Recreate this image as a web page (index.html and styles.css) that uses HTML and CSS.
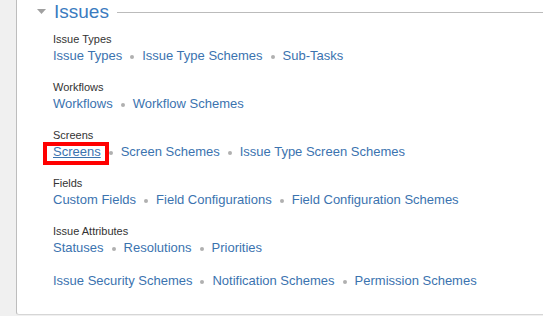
FILE: index.html
```html
<!DOCTYPE html>
<html lang="en">
<head>
<meta charset="utf-8">
<title>Issues</title>
<link rel="stylesheet" href="styles.css">
</head>
<body>
<div class="panel">
  <div class="heading">
    <svg class="twisty" width="9" height="5" viewBox="0 0 9 5"><polygon points="0,0 9,0 4.5,5" fill="#a0a0a0"/></svg>
    <h2 class="title">Issues</h2>
    <span class="rule"></span>
  </div>
  <div class="content">
    <div class="section">
      <div class="label">Issue Types</div>
      <div class="links"><a href="#">Issue Types</a><span class="sep"></span><a href="#">Issue Type Schemes</a><span class="sep"></span><a href="#">Sub-Tasks</a></div>
    </div>
    <div class="section">
      <div class="label">Workflows</div>
      <div class="links"><a href="#">Workflows</a><span class="sep"></span><a href="#">Workflow Schemes</a></div>
    </div>
    <div class="section">
      <div class="label">Screens</div>
      <div class="links"><a href="#" class="active">Screens</a><span class="sep"></span><a href="#">Screen Schemes</a><span class="sep"></span><a href="#">Issue Type Screen Schemes</a></div>
    </div>
    <div class="section">
      <div class="label">Fields</div>
      <div class="links"><a href="#">Custom Fields</a><span class="sep"></span><a href="#">Field Configurations</a><span class="sep"></span><a href="#">Field Configuration Schemes</a></div>
    </div>
    <div class="section">
      <div class="label">Issue Attributes</div>
      <div class="links"><a href="#">Statuses</a><span class="sep"></span><a href="#">Resolutions</a><span class="sep"></span><a href="#">Priorities</a></div>
    </div>
    <div class="section">
      <div class="links"><a href="#">Issue Security Schemes</a><span class="sep"></span><a href="#">Notification Schemes</a><span class="sep"></span><a href="#">Permission Schemes</a></div>
    </div>
  </div>
</div>
</body>
</html>
```
FILE: styles.css
```css
html, body {
  margin: 0;
  padding: 0;
}
body {
  background: #f0f0f0;
  font-family: "Liberation Sans", Arial, sans-serif;
  color: #333;
  height: 316px;
  overflow: hidden;
}
.panel {
  margin-left: 16px;
  height: 315px;
  box-sizing: border-box;
  background: #fff;
  border-left: 1px solid #bdbdbd;
  border-bottom: 1px solid #d6d6d6;
  border-bottom-left-radius: 3px;
}
.heading {
  display: flex;
  align-items: center;
  height: 24px;
  padding-left: 20px;
}
.twisty {
  display: block;
  margin-top: -2px;
  margin-right: 8px;
}
.title {
  margin: 0;
  font-size: 19px;
  font-weight: normal;
  line-height: 24px;
  color: #3b7bc0;
}
.rule {
  flex: 1;
  height: 1px;
  background: #bbb;
  margin-left: 8px;
}
.content {
  padding-left: 36px;
  padding-top: 8px;
}
.section + .section {
  margin-top: 15px;
}
.label {
  font-size: 11px;
  line-height: 15px;
  color: #333;
}
.links {
  font-size: 13px;
  line-height: 18px;
}
.links a {
  color: #3b73af;
  text-decoration: none;
}
.sep {
  display: inline-block;
  width: 4px;
  height: 4px;
  margin: 0 8px;
  border-radius: 50%;
  background: #b0b0b0;
  vertical-align: middle;
}
.links a.active {
  position: relative;
  text-decoration: underline;
}
.links a.active::after {
  content: "";
  position: absolute;
  left: -10px;
  right: -8px;
  top: -2px;
  bottom: -6px;
  border: 4px solid #f00;
}
```
